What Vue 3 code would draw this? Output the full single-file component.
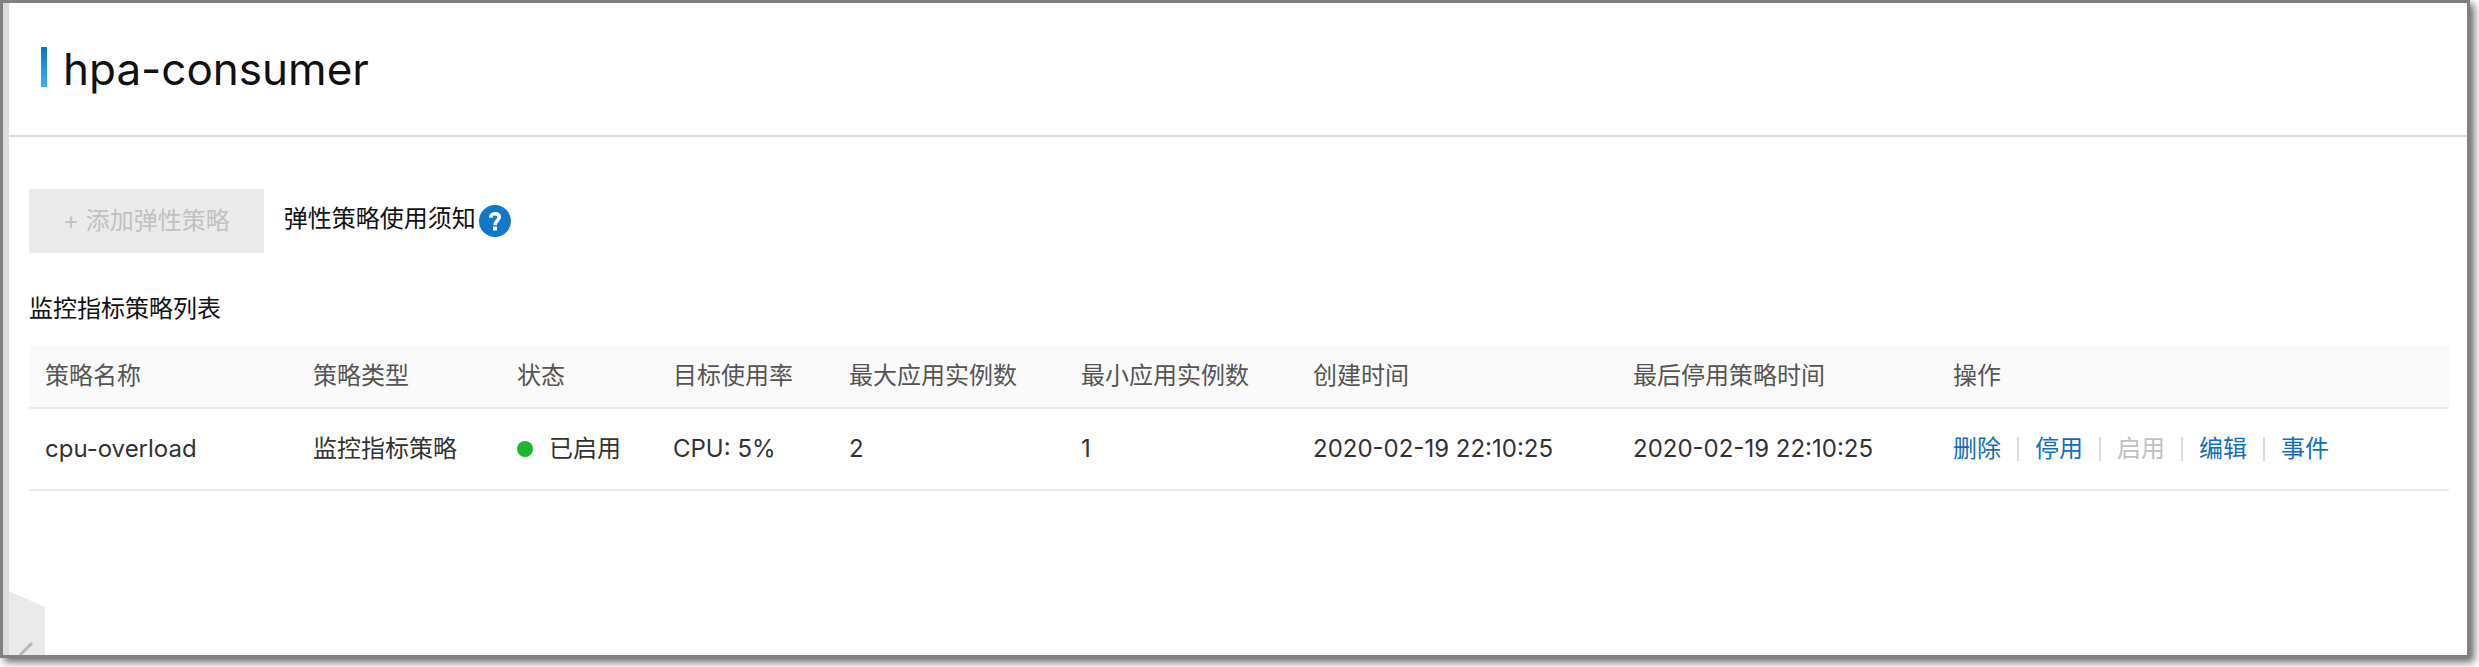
<script setup>
const columns = [
  { key: 'name', label: '策略名称', width: 268 },
  { key: 'type', label: '策略类型', width: 204 },
  { key: 'status', label: '状态', width: 156 },
  { key: 'target', label: '目标使用率', width: 176 },
  { key: 'max', label: '最大应用实例数', width: 232 },
  { key: 'min', label: '最小应用实例数', width: 232 },
  { key: 'created', label: '创建时间', width: 320 },
  { key: 'stopped', label: '最后停用策略时间', width: 320 },
  { key: 'actions', label: '操作', width: 512 },
]
const total = columns.reduce((sum, c) => sum + c.width, 0)

const rows = [
  {
    name: 'cpu-overload',
    type: '监控指标策略',
    status: '已启用',
    target: 'CPU: 5%',
    max: 2,
    min: 1,
    created: '2020-02-19 22:10:25',
    stopped: '2020-02-19 22:10:25',
  },
]

const actions = [
  { label: '删除' },
  { label: '停用' },
  { label: '启用', disabled: true },
  { label: '编辑' },
  { label: '事件' },
]
</script>

<template>
  <div class="page">
    <div class="frame">
      <header class="header">
        <h1 class="title">hpa-consumer</h1>
      </header>

      <main class="content">
        <div class="toolbar">
          <button class="add" type="button" disabled>+ 添加弹性策略</button>
          <div class="notice">
            <span>弹性策略使用须知</span>
            <button class="help" type="button" aria-label="弹性策略使用须知">
              <svg viewBox="0 0 32 32" width="32" height="32" aria-hidden="true">
                <circle cx="16" cy="16" r="16" fill="#1177cb" />
                <path d="M11.8 12.8C11.8 10.2 13.4 8.8 16 8.8s4.2 1.4 4.2 3.5c0 3.1-4.2 3.5-4.2 7.9" fill="none" stroke="#fff" stroke-width="3.6" />
                <rect x="14" y="21.6" width="4" height="3.8" fill="#fff" />
              </svg>
            </button>
          </div>
        </div>

        <h2 class="subtitle" id="list-title">监控指标策略列表</h2>

        <table class="table" aria-labelledby="list-title">
          <colgroup>
            <col v-for="c in columns" :key="c.key" :style="{ width: (c.width / total) * 100 + '%' }" />
          </colgroup>
          <thead>
            <tr>
              <th v-for="c in columns" :key="c.key" scope="col">{{ c.label }}</th>
            </tr>
          </thead>
          <tbody>
            <tr v-for="row in rows" :key="row.name">
              <td v-for="c in columns" :key="c.key">
                <div v-if="c.key === 'status'" class="status">
                  <i class="dot"></i>{{ row.status }}
                </div>
                <div v-else-if="c.key === 'actions'" class="actions">
                  <button
                    v-for="a in actions"
                    :key="a.label"
                    class="action"
                    type="button"
                    :disabled="a.disabled"
                  >{{ a.label }}</button>
                </div>
                <template v-else>{{ row[c.key] }}</template>
              </td>
            </tr>
          </tbody>
        </table>
      </main>

      <button class="collapse" type="button" aria-label="收起">
        <svg viewBox="0 0 36 64" width="36" height="64" aria-hidden="true">
          <path d="M0 0L36 16V64H0Z" fill="#eaeaea" />
          <path d="M23 52L11 64" fill="none" stroke="#b8b8b8" stroke-width="3" />
        </svg>
      </button>
    </div>
  </div>
</template>

<style>
body {
  margin: 0;
  background: #fff;
}
</style>

<style scoped>
.page {
  box-sizing: border-box;
  min-height: 100vh;
  padding: 0 9px 9px 0;
  overflow: hidden;
  display: flex;
  font-family: Inter, "Noto Sans CJK SC", sans-serif;
  font-size: 24px;
  line-height: 32px;
  color: #333;
}
.frame {
  position: relative;
  flex: 1;
  min-width: 0;
  border: 3px solid #808080;
  background: linear-gradient(#dcdcdc, #dcdcdc) left / 6px 100% no-repeat #fff;
  box-shadow: 4px 4px 8px rgba(0, 0, 0, 0.6);
  padding-left: 6px;
}
button {
  font: inherit;
  border: 0;
  padding: 0;
  background: none;
  cursor: pointer;
}
button:disabled {
  cursor: default;
}
.header {
  height: 132px;
  padding-left: 32px;
  border-bottom: 2px solid #dcdcdc;
  display: flex;
  align-items: center;
}
.title {
  margin: 0;
  display: flex;
  align-items: flex-start;
  gap: 16px;
  font-size: 44px;
  line-height: 60px;
  font-weight: 400;
  color: #111;
}
.title::before {
  content: "";
  width: 6px;
  height: 40px;
  margin-top: 8px;
  background: linear-gradient(#1070c4, #3fadf8);
}
.content {
  padding: 52px 18px 0 20px;
}
.toolbar {
  display: flex;
  gap: 20px;
}
.add {
  height: 64px;
  padding: 0 34px;
  background: #ebebeb;
  color: #c1c1c1;
}
.notice {
  height: 60px;
  display: flex;
  align-items: center;
  gap: 3px;
  color: #111;
}
.help {
  height: 32px;
  padding-top: 2px;
}
.help svg {
  display: block;
}
.subtitle {
  margin: 40px 0 20px;
  font-size: 24px;
  line-height: 32px;
  font-weight: 400;
  color: #111;
}
.table {
  width: 100%;
  table-layout: fixed;
  border-collapse: separate;
  border-spacing: 0;
}
.table th,
.table td {
  box-sizing: border-box;
  padding: 0 16px;
  text-align: left;
  font-weight: 400;
  white-space: nowrap;
  border-bottom: 2px solid #ebebeb;
}
.table th {
  height: 64px;
  background: #fafafa;
  color: #555;
}
.table td {
  height: 82px;
}
.status {
  display: flex;
  align-items: center;
  gap: 16px;
}
.dot {
  width: 16px;
  height: 16px;
  border-radius: 50%;
  background: #1eb52f;
}
.actions {
  display: flex;
  align-items: center;
}
.action {
  display: flex;
  align-items: center;
  color: #1070c0;
}
.action:disabled {
  color: #c1c1c1;
}
.action + .action::before {
  content: "";
  width: 2px;
  height: 24px;
  margin: 0 16px;
  background: #dcdcdc;
}
.collapse {
  position: absolute;
  left: 6px;
  bottom: 0;
  height: 64px;
}
.collapse svg {
  display: block;
}
</style>
